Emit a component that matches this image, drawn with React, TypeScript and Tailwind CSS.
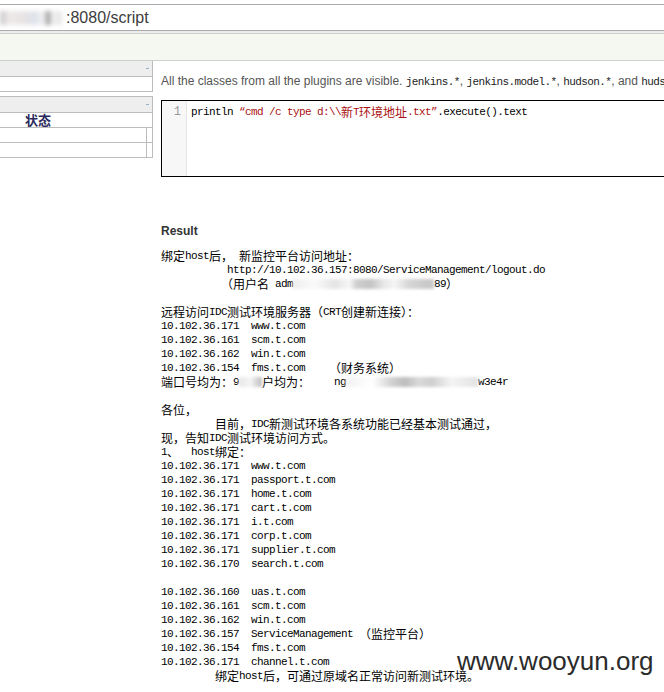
const CJK = /([\u3000-\u303f\u4e00-\u9fff\uff00-\uffef]+)/;

// SimSun-like mixing: half-width latin 6px, full-width CJK 12px
function T({ s }: { s: string }) {
  const parts = s.split(CJK);
  return (
    <>
      {parts.map((p, i) =>
        i % 2 ? (
          <span
            key={i}
            className="align-top leading-[14px] text-[12px] tracking-normal font-['Noto_Sans_CJK_SC',sans-serif]"
          >
            {p}
          </span>
        ) : (
          p
        )
      )}
    </>
  );
}

function Blur({ w }: { w: string }) {
  return <span className={`inline-block h-[10px] align-middle blur-[1.5px] ${w}`} />;
}

const hosts1 = [
  "10.102.36.171  www.t.com",
  "10.102.36.161  scm.t.com",
  "10.102.36.162  win.t.com",
  "10.102.36.154  fms.t.com    （财务系统）",
];

const hosts2 = [
  "10.102.36.171  www.t.com",
  "10.102.36.171  passport.t.com",
  "10.102.36.171  home.t.com",
  "10.102.36.171  cart.t.com",
  "10.102.36.171  i.t.com",
  "10.102.36.171  corp.t.com",
  "10.102.36.171  supplier.t.com",
  "10.102.36.170  search.t.com",
];

const hosts3 = [
  "10.102.36.160  uas.t.com",
  "10.102.36.161  scm.t.com",
  "10.102.36.162  win.t.com",
  "10.102.36.157  ServiceManagement （监控平台）",
  "10.102.36.154  fms.t.com",
  "10.102.36.171  channel.t.com",
];

const line = "h-[14px] leading-[14px] whitespace-pre";

function L({ s, className = "" }: { s: string; className?: string }) {
  return (
    <div className={`${line} ${className}`}>
      <T s={s} />
    </div>
  );
}

export default function App() {
  return (
    <div className="relative w-[664px] h-[692px] overflow-hidden bg-white font-['Liberation_Sans',Arial,sans-serif]">
      {/* address bar */}
      <div className="h-[4px] bg-white" />
      <div className="h-[27px] border-y border-[#ababab] flex items-center">
        <div className="w-[66px] h-[16px] flex items-center">
          <span className="w-[62px] h-[14px] blur-[2px] bg-[linear-gradient(to_right,#c8c8c8,#efeaea_15%,#e9e4e4_35%,#dde2ea_55%,#f2f2f2_70%,#9a9a9a_78%,#f0f0f0_84%,#e6e6e6)]" />
        </div>
        <span className="text-[16px] text-[#3d3d3d] leading-none">:8080/script</span>
      </div>
      <div className="h-[2px] bg-[#ececec]" />
      <div className="h-[28px] bg-[#f5f7f1] border-y border-[#cfcfcf]" />

      <div className="flex">
        {/* side panel */}
        <aside className="w-[153px] shrink-0">
          <div className="border-r border-b border-[#bcbcbc]">
            <div className="h-[16px] bg-[#eeeeee] border-b border-[#bcbcbc] flex items-center justify-end pr-[3px]">
              <span className="w-[3px] h-[1px] bg-[#9aaed0]" />
            </div>
            <div className="h-[14px]" />
          </div>
          <div className="h-[4px]" />
          <div className="border-r border-t border-b border-[#bcbcbc]">
            <div className="h-[16px] bg-[#eeeeee] border-b border-[#bcbcbc] flex items-center justify-end pr-[3px]">
              <span className="w-[3px] h-[1px] bg-[#9aaed0]" />
            </div>
            <div className="h-[15px] border-b border-[#bcbcbc] pl-[25px] text-[13px] leading-[13px] font-bold text-[#2a2a5e] font-['Noto_Sans_CJK_SC',sans-serif]">
              状态
            </div>
            <div className="h-[15px] border-b border-[#bcbcbc]">
              <div className="w-[147px] h-full border-r border-[#bcbcbc]" />
            </div>
            <div className="h-[14px]">
              <div className="w-[147px] h-full border-r border-[#bcbcbc]" />
            </div>
          </div>
        </aside>

        {/* main */}
        <main className="flex-1 min-w-0 pl-[8px]">
          <div className="mt-[12px] h-[16px] leading-[16px] whitespace-nowrap overflow-hidden text-[12px] text-[#555]">
            All the classes from all the plugins are visible.{" "}
            <span className="font-['Liberation_Mono',monospace] text-[11px] tracking-[-0.6px] text-[#222]">jenkins.*</span>,{" "}
            <span className="font-['Liberation_Mono',monospace] text-[11px] tracking-[-0.6px] text-[#222]">jenkins.model.*</span>,{" "}
            <span className="font-['Liberation_Mono',monospace] text-[11px] tracking-[-0.6px] text-[#222]">hudson.*</span>, and{" "}
            <span className="font-['Liberation_Mono',monospace] text-[11px] tracking-[-0.6px] text-[#222]">huds</span>
          </div>

          {/* script editor */}
          <div className="mt-[11px] h-[77px] border border-black border-r-0 flex">
            <div className="w-[25px] shrink-0 bg-[#f7f7f7] border-r border-[#e6e6e6] pt-[4px] pr-[5px] text-right text-[12px] leading-[14px] text-[#999] font-['Liberation_Mono',monospace]">
              1
            </div>
            <div className="pl-[4px] pt-[4px] whitespace-pre font-['Liberation_Mono',monospace] text-[11px] tracking-[-0.6px] leading-[14px] text-black">
              println{" "}
              <span className="text-[#aa1111]">
                <T s={"“cmd /c type d:\\\\新T环境地址.txt”"} />
              </span>
              .execute().text
            </div>
          </div>

          <div className="mt-[47px] h-[14px] leading-[14px] text-[12px] font-bold text-[#333]">Result</div>

          {/* output */}
          <div className="mt-[11px] font-['Liberation_Mono',monospace] text-[11px] tracking-[-0.6px] text-black">
            <L s="绑定host后， 新监控平台访问地址：" />
            <L s="http://10.102.36.157:8080/ServiceManagement/logout.do" className="pl-[66px]" />
            <div className={`${line} pl-[60px]`}>
              <T s="（用户名 adm" />
              <Blur w="w-[141px] bg-[linear-gradient(to_right,#eee,#fafafa_15%,#e4e4e4_30%,#f7f7f7_40%,#cfcfcf_45%,#c4c4c4_55%,#e9e9e9_65%,#f5f5f5_72%,#d6d6d6_82%,#c9c9c9_95%)]" />
              <T s="89）" />
            </div>
            <L s="" />
            <L s="远程访问IDC测试环境服务器（CRT创建新连接）：" />
            {hosts1.map((h, i) => (
              <L key={i} s={h} />
            ))}
            <div className={line}>
              <T s="端口号均为：9" />
              <Blur w="w-[23px] bg-[linear-gradient(to_right,#e6e6e6,#f5f5f5_50%,#bcbcbc)]" />
              <T s="户均为：    ng" />
              <Blur w="w-[132px] bg-[linear-gradient(to_right,#f2f2f2,#fff_20%,#d0d0d0_35%,#bdbdbd_45%,#d9d9d9_55%,#cfcfcf_65%,#f4f4f4_80%,#e2e2e2)]" />
              <T s="w3e4r" />
            </div>
            <L s="" />
            <L s="各位，" />
            <L s="目前，IDC新测试环境各系统功能已经基本测试通过，" className="pl-[54px]" />
            <L s="现，告知IDC测试环境访问方式。" />
            <L s="1、  host绑定：" />
            {hosts2.map((h, i) => (
              <L key={i} s={h} />
            ))}
            <L s="" />
            {hosts3.map((h, i) => (
              <L key={i} s={h} />
            ))}
            <L s="绑定host后，可通过原域名正常访问新测试环境。" className="pl-[54px]" />
          </div>
        </main>
      </div>

      {/* watermark */}
      <div className="absolute left-[457px] top-[646px] text-[26px] leading-[30px] text-[#2b2b2b] [text-shadow:0_0_2px_#fff]">
        www.wooyun.org
      </div>
    </div>
  );
}
